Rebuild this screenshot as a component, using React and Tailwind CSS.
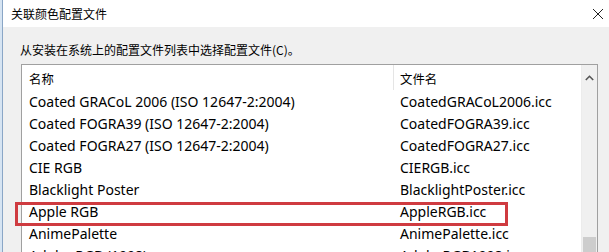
import React from "react";

const rows = [
  ["Coated GRACoL 2006 (ISO 12647-2:2004)", "CoatedGRACoL2006.icc"],
  ["Coated FOGRA39 (ISO 12647-2:2004)", "CoatedFOGRA39.icc"],
  ["Coated FOGRA27 (ISO 12647-2:2004)", "CoatedFOGRA27.icc"],
  ["CIE RGB", "CIERGB.icc"],
  ["Blacklight Poster", "BlacklightPoster.icc"],
  ["Apple RGB", "AppleRGB.icc"],
  ["AnimePalette", "AnimePalette.icc"],
  ["Adobe RGB (1998)", "AdobeRGB1998.icc"],
];

const font = {
  fontFamily: '"Segoe UI", "Noto Sans", "Noto Sans CJK SC", sans-serif',
};

export default function App() {
  return (
    <div
      className="relative flex h-[252px] w-[609px] flex-col overflow-hidden bg-[#f0f0f0] text-[14px] text-[#000]"
      style={font}
    >
      <div className="absolute left-0 top-0 h-full w-[2px] bg-[#d6e4f2]" />
      <div className="absolute left-[2px] top-0 h-full w-[1px] bg-[#8aa6c6]" />

      <div className="flex h-[27px] shrink-0 items-center justify-between bg-white pl-[11px] pr-[3px]">
        <span className="font-['Noto_Sans_CJK_SC'] text-[12px] leading-none">关联颜色配置文件</span>
        <svg width="14" height="14" viewBox="0 0 14 14" className="mr-[1px]">
          <path d="M2 2 L12 12 M12 2 L2 12" stroke="#222" strokeWidth="1" />
        </svg>
      </div>

      <div className="flex min-h-0 flex-1 flex-col pl-[20px] pr-[11px]">
        <div className="flex h-[37px] shrink-0 items-center pt-[9px] font-['Noto_Sans_CJK_SC'] text-[12px] leading-none">
          从安装在系统上的配置文件列表中选择配置文件(C)。
        </div>
        <div className="ml-[1px] flex min-h-0 flex-1 overflow-hidden border border-b-0 border-[#a0a0a0] bg-white">
          <div className="flex min-w-0 flex-1 flex-col">
            <div className="flex h-[25px] shrink-0 items-center">
              <div className="w-[371px] pl-[7px] pt-[4px] font-['Noto_Sans_CJK_SC'] text-[12.4px]">名称</div>
              <div className="h-full w-px bg-[#e5e5e5]" />
              <div className="pl-[6px] pt-[4px] font-['Noto_Sans_CJK_SC'] text-[12.4px]">文件名</div>
            </div>
            {rows.map(([n, f]) => (
              <div key={n} className="flex h-[22px] shrink-0 items-center whitespace-nowrap">
                <div className="w-[372px] pl-[7px]">{n}</div>
                <div className="pl-[6px]">{f}</div>
              </div>
            ))}
          </div>
          <div className="flex w-[16px] shrink-0 flex-col justify-between border-l border-[#ececec] bg-[#f0f0f0]">
            <div className="flex h-[24px] items-center justify-center pt-[1px]">
              <svg width="9" height="6" viewBox="0 0 9 6">
                <path d="M0.8 5 L4.5 1.3 L8.2 5" stroke="#555" strokeWidth="1.6" fill="none" />
              </svg>
            </div>
            <div className="mx-[1px] h-[15px] bg-[#cdcdcd]" />
          </div>
        </div>
      </div>

      <div className="absolute left-[15px] top-[202px] h-[24px] w-[493px] border-[3px] border-[#cf3b40]" />
    </div>
  );
}
